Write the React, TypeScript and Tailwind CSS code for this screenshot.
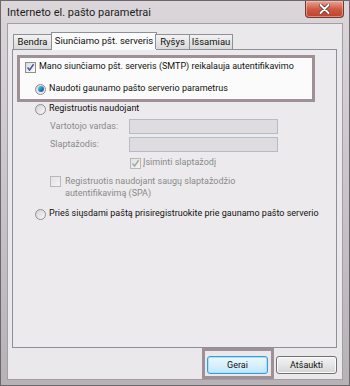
import type { ReactNode } from 'react'

function Checkbox({ checked, disabled }: { checked?: boolean; disabled?: boolean }) {
  return (
    <span
      className={
        'flex h-[11px] w-[11px] shrink-0 items-center justify-center border ' +
        (disabled
          ? 'border-[#b8b8b8] bg-gradient-to-br from-[#e2e2e2] to-[#f4f4f4]'
          : 'border-[#8f8f8f] bg-gradient-to-br from-[#dcdcdc] to-[#fbfbfb]')
      }
    >
      {checked && (
        <svg width="9" height="9" viewBox="0 0 9 9">
          <path
            d="M1.5 4.5 L3.6 7 L7.6 1.2"
            fill="none"
            stroke={disabled ? '#a9a9a9' : '#4a5c98'}
            strokeWidth="1.6"
          />
        </svg>
      )}
    </span>
  )
}

function Radio({ checked }: { checked?: boolean }) {
  return (
    <span className="flex h-[11px] w-[11px] shrink-0 items-center justify-center rounded-full border border-[#8f8f8f] bg-gradient-to-br from-[#d2d2d2] to-[#fafafa]">
      {checked && (
        <span className="h-[6px] w-[6px] rounded-full bg-gradient-to-br from-[#7fd0f5] via-[#2a86c6] to-[#154d8c]" />
      )}
    </span>
  )
}

function Row({ className, children }: { className: string; children: ReactNode }) {
  return <div className={'flex h-[12px] items-center whitespace-nowrap ' + className}>{children}</div>
}

export default function App() {
  const tabs = [
    { label: 'Bendra', width: 'w-[39px]' },
    { label: 'Siunčiamo pšt. serveris', width: 'w-[106px]', active: true },
    { label: 'Ryšys', width: 'w-[35px]' },
    { label: 'Išsamiau', width: 'w-[44px]' },
  ]

  return (
    <div className="flex h-[386px] w-[350px] flex-col border border-[#6b676a] bg-gradient-to-b from-[#dad6d9] via-[#c9c4c8] to-[#b7b2b6] font-['Roboto',sans-serif] text-[9px] text-[#111]">
      {/* Title bar */}
      <div className="flex h-[22px] shrink-0 items-start justify-between pl-[6px] pr-[5px]">
        <span className="mt-[6px] whitespace-nowrap text-[11px] leading-[12px] text-[#1e1e1e]">
          Interneto el. pašto parametrai
        </span>
        <div className="flex h-[17px] w-[39px] items-center justify-center rounded-b-[4px] border border-t-0 border-[#6e3a33] bg-gradient-to-b from-[#e9a595] via-[#cf5a43] to-[#c0402a] shadow-[inset_0_0_0_1px_rgba(255,210,200,0.5)]">
          <svg width="11" height="10" viewBox="0 0 11 10">
            <path d="M1.5 1 L9.5 9 M9.5 1 L1.5 9" stroke="#4a2a26" strokeWidth="3.4" strokeLinecap="round" />
            <path d="M1.5 1 L9.5 9 M9.5 1 L1.5 9" stroke="#ffffff" strokeWidth="2" strokeLinecap="round" />
          </svg>
        </div>
      </div>

      {/* Client area */}
      <div className="mx-[6px] mb-[6px] flex flex-1 flex-col border border-[#a39ea2] bg-[#ebe8eb]">
        {/* Tabs */}
        <div className="relative z-10 flex h-[25px] items-end whitespace-nowrap pl-[5px] text-[9.5px]">
          {tabs.map(tab => (
            <div
              key={tab.label}
              className={
                'flex items-center justify-center border border-b-0 border-[#8d9097] leading-[12px] ' +
                tab.width +
                (tab.active
                  ? ' -mx-px -mb-px h-[18px] bg-[#fbfbfb] pb-[2px]'
                  : ' h-[15px] bg-gradient-to-b from-[#f3f3f3] to-[#d9d9d9] ml-[-1px] first:ml-0')
              }
            >
              {tab.label}
            </div>
          ))}
        </div>

        {/* Panel */}
        <div className="ml-[4px] mr-[5px] h-[299px] border border-[#8d9097] bg-[#eceaec] pl-[4px] pt-[5px]">
          <div className="h-[47px] w-[298px] border-[3px] border-[#9d9097] bg-[#fbfbfb] pl-[5px] pt-[3px]">
            <Row className="gap-[3px]">
              <Checkbox checked />
              <span>Mano siunčiamo pšt. serveris (SMTP) reikalauja autentifikavimo</span>
            </Row>
            <Row className="mt-[10px] gap-[3px] pl-[10px]">
              <Radio checked />
              <span>Naudoti gaunamo pašto serverio parametrus</span>
            </Row>
          </div>

          <Row className="mt-[1px] gap-[3px] pl-[18px]">
            <Radio />
            <span>Registruotis naudojant</span>
          </Row>

          <div className="mt-[4px] flex h-[15px] items-center whitespace-nowrap pl-[33px] text-[#8a8a8a]">
            <span className="w-[79px]">Vartotojo vardas:</span>
            <span className="h-[15px] w-[149px] border border-[#b4bdc6] bg-[#dedcde]" />
          </div>
          <div className="mt-[3px] flex h-[15px] items-center whitespace-nowrap pl-[33px] text-[#8a8a8a]">
            <span className="w-[79px]">Slaptažodis:</span>
            <span className="h-[15px] w-[149px] border border-[#b4bdc6] bg-[#dedcde]" />
          </div>

          <Row className="mt-[5px] gap-[2px] pl-[113px] text-[#8a8a8a]">
            <Checkbox checked disabled />
            <span>Įsiminti slaptažodį</span>
          </Row>

          <div className="mt-[7px] flex items-start gap-[4px] pl-[33px] text-[#8a8a8a]">
            <Checkbox disabled />
            <span className="mt-[-1px] leading-[12px]">
              Registruotis naudojant saugų slaptažodžio
              <br />
              autentifikavimą (SPA)
            </span>
          </div>

          <Row className="mt-[9px] gap-[3px] pl-[18px]">
            <Radio />
            <span>Prieš siųsdami paštą prisiregistruokite prie gaunamo pašto serverio</span>
          </Row>
        </div>

        {/* Buttons */}
        <div className="flex items-start justify-end gap-[2px] pr-[5px]">
          <div className="border-[3px] border-[#9d9097] pb-[2px] pl-[2px] pr-[3px] pt-[5px]">
            <button className="flex h-[18px] w-[61px] items-center justify-center rounded-[3px] border border-[#3c9ad6] bg-gradient-to-b from-[#eaf6fd] via-[#d9f0fc] to-[#bee6fd] leading-[12px] shadow-[inset_0_0_0_1px_#a6e0fb]">
              Gerai
            </button>
          </div>
          <button className="mt-[8px] flex h-[18px] w-[61px] items-center justify-center rounded-[3px] border border-[#707070] bg-gradient-to-b from-[#f2f2f2] via-[#e6e6e6] to-[#d4d4d4] leading-[12px] shadow-[inset_0_0_0_1px_#fbfbfb]">
            Atšaukti
          </button>
        </div>
      </div>
    </div>
  )
}
